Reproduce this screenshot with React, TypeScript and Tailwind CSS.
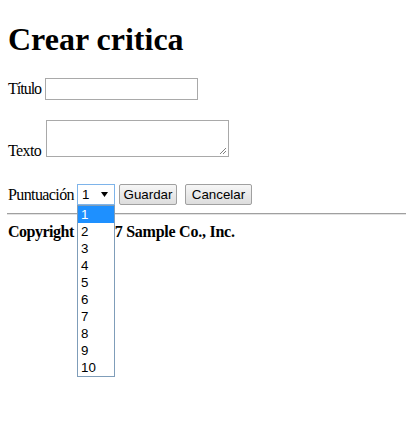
import React from "react";

const options = ["1", "2", "3", "4", "5", "6", "7", "8", "9", "10"];

export default function App() {
  return (
    <div className="p-2 font-['Liberation_Serif',serif] text-[16px] text-black bg-white min-h-[430px]">
      <h1 className="text-[32px] font-bold leading-[37px] mt-[13px] mb-[20px]">Crear critica</h1>

      <div className="flex items-center h-[22px]">
        <span className="leading-[18px] tracking-[-1px] w-[37px] whitespace-nowrap shrink-0">Título</span>
        <div className="w-[153px] h-[22px] border border-[#a9a9a9] bg-white" />
      </div>

      <div className="flex items-end mt-[20px]">
        <span className="leading-[12px] tracking-[-0.6px] w-[38px] whitespace-nowrap shrink-0">Texto</span>
        <div className="relative w-[183px] h-[37px] border border-[#a9a9a9] bg-white">
          <svg className="absolute right-[1px] bottom-[1px]" width="8" height="8" viewBox="0 0 8 8">
            <line x1="1" y1="7" x2="7" y2="1" stroke="#808080" strokeWidth="1" />
            <line x1="4" y1="7" x2="7" y2="4" stroke="#808080" strokeWidth="1" />
          </svg>
        </div>
      </div>

      <div className="flex items-center mt-[27px] h-[21px]">
        <span className="leading-[18px] tracking-[-0.6px] w-[69px] whitespace-nowrap shrink-0">Puntuación</span>
        <div className="relative w-[38px] h-[21px]">
          <div className="flex items-center justify-between w-full h-full border border-[#7eb4ea] bg-white pl-[4px] pr-[6px] font-['Liberation_Sans',sans-serif] text-[13.33px]">
            <span>1</span>
            <svg width="7" height="5" viewBox="0 0 7 5">
              <polygon points="0,0 7,0 3.5,5" fill="#000" />
            </svg>
          </div>
          <div className="absolute left-0 top-full w-[38px] border border-[#7f9db9] bg-white font-['Liberation_Sans',sans-serif] text-[13.33px] z-10">
            {options.map((o, i) => (
              <div
                key={o}
                className={
                  i === 0
                    ? "h-[17px] leading-[17px] pl-[3px] bg-[#1e90ff] text-white"
                    : "h-[17px] leading-[17px] pl-[3px] text-black"
                }
              >
                {o}
              </div>
            ))}
          </div>
        </div>
        <button className="ml-[4px] w-[58px] h-[21px] border border-[#a0a0a0] rounded-[2px] bg-gradient-to-b from-[#f6f6f6] to-[#dddddd] font-['Liberation_Sans',sans-serif] text-[13.33px] leading-[19px] text-black">
          Guardar
        </button>
        <button className="ml-[8px] w-[67px] h-[21px] border border-[#a0a0a0] rounded-[2px] bg-gradient-to-b from-[#f6f6f6] to-[#dddddd] font-['Liberation_Sans',sans-serif] text-[13.33px] leading-[19px] text-black">
          Cancelar
        </button>
      </div>

      <div className="mt-[8px] -ml-[1px] -mr-2 border-t border-[#a0a0a0] border-b border-b-[#e3e3e3]" />

      <p className="mt-[8px] font-bold leading-[18px] whitespace-nowrap">
        <span className="tracking-[-0.5px]">Copyright © 201</span>
        <span className="tracking-[-0.25px]">7 Sample Co., Inc.</span>
      </p>
    </div>
  );
}
